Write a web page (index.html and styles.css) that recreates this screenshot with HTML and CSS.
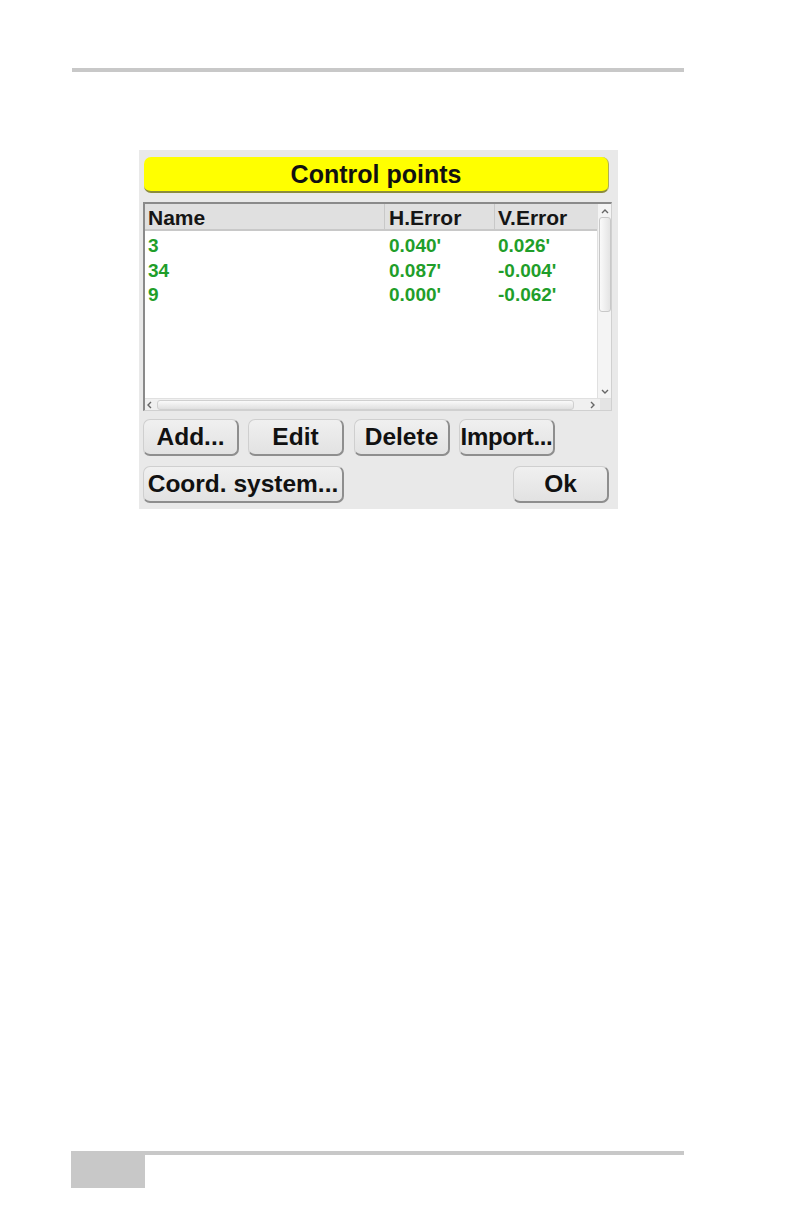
FILE: index.html
```html
<!DOCTYPE html>
<html>
<head>
    <title>Control points</title>
    <link rel="stylesheet" href="styles.css">
</head>
<body>
    <div class="page">
        <div class="top-rule"></div>

        <div class="dialog">
            <div class="title-bar">Control points</div>

            <div class="list-box">
                <div class="list-main">
                    <div class="list-head">
                        <div class="col col-name">Name</div>
                        <div class="col col-h">H.Error</div>
                        <div class="col col-v">V.Error</div>
                    </div>
                    <div class="list-rows">
                        <div class="row">
                            <div class="col col-name">3</div>
                            <div class="col col-h">0.040'</div>
                            <div class="col col-v">0.026'</div>
                        </div>
                        <div class="row">
                            <div class="col col-name">34</div>
                            <div class="col col-h">0.087'</div>
                            <div class="col col-v">-0.004'</div>
                        </div>
                        <div class="row">
                            <div class="col col-name">9</div>
                            <div class="col col-h">0.000'</div>
                            <div class="col col-v">-0.062'</div>
                        </div>
                    </div>
                    <div class="vscroll">
                        <svg class="arrow" width="12" height="8" viewBox="0 0 12 8"><path d="M3 6 L6 3 L9 6" fill="none" stroke="#666" stroke-width="1.4"/></svg>
                        <div class="vthumb"></div>
                        <div class="vspace"></div>
                        <svg class="arrow" width="12" height="8" viewBox="0 0 12 8"><path d="M3 2 L6 5 L9 2" fill="none" stroke="#666" stroke-width="1.4"/></svg>
                    </div>
                </div>
                <div class="hscroll">
                    <svg class="harrow" width="10" height="10" viewBox="0 0 10 10"><path d="M6 2 L3 5 L6 8" fill="none" stroke="#666" stroke-width="1.4"/></svg>
                    <div class="hthumb"></div>
                    <svg class="harrow right" width="12" height="10" viewBox="0 0 12 10"><path d="M5 2 L8 5 L5 8" fill="none" stroke="#666" stroke-width="1.4"/></svg>
                    <div class="corner"></div>
                </div>
            </div>

            <div class="btn-row">
                <button type="button" class="btn">Add...</button>
                <button type="button" class="btn">Edit</button>
                <button type="button" class="btn btn-delete">Delete</button>
                <button type="button" class="btn btn-import">Import...</button>
            </div>
            <div class="btn-row second">
                <button type="button" class="btn btn-coord">Coord. system...</button>
                <button type="button" class="btn btn-ok">Ok</button>
            </div>
        </div>

        <div class="footer">
            <div class="footer-tab"></div>
        </div>
    </div>
</body>
</html>
```

FILE: styles.css
```css
body {
    margin: 0;
    background: #fff;
    font-family: "Liberation Sans", Arial, sans-serif;
}

.page {
    width: 792px;
    height: 1224px;
    padding-top: 68px;
    box-sizing: border-box;
}

.top-rule {
    margin-left: 72px;
    width: 612px;
    height: 4px;
    background: #c8c8c8;
}

.dialog {
    margin: 78px 0 0 139px;
    width: 479px;
    height: 359px;
    padding: 7px 6px 0 4px;
    box-sizing: border-box;
    background: #e9e9e9;
}

.title-bar {
    margin-left: 1px;
    width: 465px;
    height: 36px;
    box-sizing: border-box;
    background: #ffff00;
    border-radius: 7px;
    border-bottom: 2px solid #8c8c3c;
    border-right: 1px solid #b0b050;
    font-weight: bold;
    font-size: 25px;
    line-height: 35px;
    text-align: center;
    color: #111;
}

.list-box {
    margin-top: 9px;
    width: 469px;
    height: 209px;
    box-sizing: border-box;
    border-top: 2px solid #8a8a8a;
    border-left: 2px solid #8a8a8a;
    border-right: 1px solid #d0d0d0;
    border-bottom: 1px solid #d0d0d0;
    background: #fff;
    display: flex;
    flex-direction: column;
}

.list-main {
    flex: 1;
    display: grid;
    grid-template-columns: 452px 14px;
    grid-template-rows: 27px 1fr;
}

.list-head {
    grid-column: 1;
    display: flex;
    background: #e0e0e0;
    border-bottom: 2px solid #c8c8c8;
    font-size: 21px;
    font-weight: bold;
    color: #151515;
    line-height: 27px;
}

.list-head .col {
    border-right: 1px solid #c8c8c8;
}

.list-rows {
    grid-column: 1;
    padding-top: 5px;
}

.row {
    display: flex;
    height: 24.5px;
    font-size: 19px;
    font-weight: bold;
    color: #1f9e2a;
    line-height: 20px;
}

.col {
    box-sizing: border-box;
    padding-left: 3px;
}

.col-name {
    width: 240px;
}

.col-h {
    width: 110px;
    padding-left: 4px;
}

.col-v {
    width: 102px;
    padding-left: 3px;
}

.list-head .col-v {
    border-right: none;
}

.vscroll {
    grid-column: 2;
    grid-row: 1 / span 2;
    display: flex;
    flex-direction: column;
    align-items: center;
    background: #f4f4f4;
    border-left: 1px solid #e0e0e0;
    padding: 3px 0 2px;
}

.vthumb {
    width: 10px;
    height: 93px;
    margin-top: 2px;
    border: 1px solid #c8c8c8;
    border-radius: 3px;
    background: linear-gradient(to right, #fafafa, #e4e4e4);
}

.vspace {
    flex: 1;
}

.hscroll {
    height: 11px;
    display: flex;
    align-items: center;
    background: #f0f0f0;
    border-top: 1px solid #e0e0e0;
}

.harrow {
    margin: 0 2px 0 0;
}

.hthumb {
    width: 415px;
    height: 8px;
    border: 1px solid #d0d0d0;
    border-radius: 3px;
    background: linear-gradient(#fafafa, #e0e0e0);
}

.harrow.right {
    margin-left: 12px;
}

.corner {
    flex: 1;
    align-self: stretch;
    background: #e4e4e4;
}

.btn-row {
    display: flex;
    gap: 9px;
    margin-top: 8px;
}

.btn-row.second {
    margin-top: 10px;
    justify-content: space-between;
    width: 466px;
}

.btn {
    width: 96px;
    height: 37px;
    padding: 0;
    box-sizing: border-box;
    background: linear-gradient(#f0f0f0, #e2e2e2);
    border: 1px solid #cfcfcf;
    border-right: 2px solid #8e8e8e;
    border-bottom: 2px solid #8e8e8e;
    border-radius: 7px;
    font-family: "Liberation Sans", Arial, sans-serif;
    font-weight: bold;
    font-size: 24.5px;
    color: #111;
    line-height: 32px;
    white-space: nowrap;
    display: flex;
    justify-content: center;
    align-items: center;
}

.btn-delete {
    margin-left: 1px;
}

.btn-import {
    font-size: 24px;
    letter-spacing: -0.3px;
}

.btn-coord {
    width: 201px;
}

.footer {
    margin-top: 642px;
    margin-left: 71px;
    width: 613px;
    border-top: 4px solid #c8c8c8;
}

.footer-tab {
    width: 74px;
    height: 33px;
    background: #c8c8c8;
}
```
